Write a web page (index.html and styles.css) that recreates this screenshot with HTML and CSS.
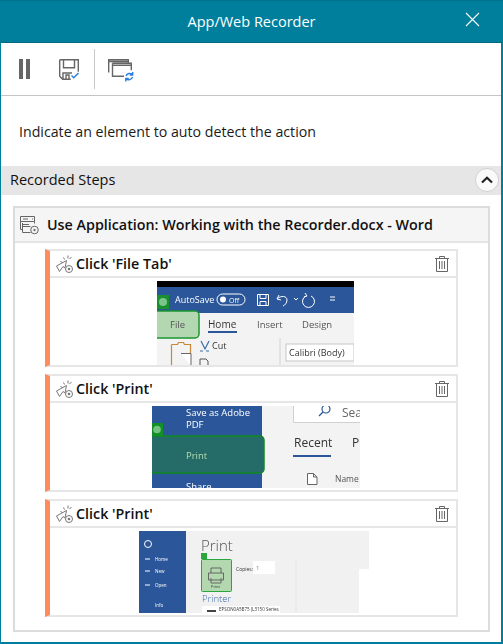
FILE: index.html
```html
<!doctype html>
<html>
<head>
    <meta charset="utf-8">
    <title>App/Web Recorder</title>
    <link rel="stylesheet" href="styles.css">
</head>
<body>
<div id="win">
    <div id="title">
        <span>App/Web Recorder</span>
        <svg class="close" width="15" height="15" viewBox="0 0 15 15"><path d="M1 1L14 14M14 1L1 14"/></svg>
    </div>

    <div id="toolbar">
        <svg class="pause" width="11" height="20" viewBox="0 0 11 20"><path d="M0 0h4v20H0zM7 0h4v20H7z"/></svg>
        <svg class="save" width="21" height="21" viewBox="0 0 21 21">
            <path class="grey" d="M.7.7h18.600v12M.7.7v16.600l3 3h8M4.500.7v8h11v-8M4 20v-6h9M7 20v-4h3v4"/>
            <path class="blue" d="M12.500 16.500l2.300 2.300 4.700-4.800"/>
        </svg>
        <span class="sep"></span>
        <svg class="windows" width="26" height="23" viewBox="0 0 26 23">
            <path class="grey" d="M.7 13.500V.7h19.600v3M.7 2.500h19.600M4.500 4.200h18.800v7M4.500 4.200v13h11.500M4.500 6.200h18.800"/>
            <path class="blue" d="M18 17a4 4 0 0 1 6.500-1.500M24.700 13v3h-3M24.500 18a4 4 0 0 1-6.500 1.800M17.800 22.500v-3h3"/>
        </svg>
    </div>

    <p id="hint">Indicate an element to auto detect the action</p>

    <div id="steps-head">
        <span>Recorded Steps</span>
        <span class="collapse"><svg width="12" height="8" viewBox="0 0 12 8"><path d="M1 6.500L6 1.800l5 4.700"/></svg></span>
    </div>

    <div id="app">
        <div class="app-head">
            <svg class="app-icon" width="19" height="19" viewBox="0 0 19 19">
                <path d="M.5.500h14v5H.5zM.5 5.500v8h2M14.500 5.500v2M3 3h5M3 8.500h6M2.500 7v9.500h8M2.500 10.500h8M12 3h1"/>
                <circle cx="14.500" cy="14" r="3.800"/><circle class="dot" cx="14.500" cy="14" r="1.200"/>
            </svg>
            Use Application: Working with the Recorder.docx - Word
        </div>
        <div class="step-list">

            <div class="step">
                <div class="step-head">
                    <svg class="click" width="17" height="18" viewBox="0 0 17 18"><use href="#click-icon"/></svg>
                    <span class="step-name">Click 'File Tab'</span>
                    <svg class="trash" width="14" height="16" viewBox="0 0 14 16"><use href="#trash-icon"/></svg>
                </div>
                <div class="shot">
                    <svg class="thumb" width="197" height="84" viewBox="0 0 197 84">
                        <rect width="197" height="84" fill="#f3f3f3"/>
                        <rect width="197" height="6" fill="#000"/>
                        <rect y="6" width="197" height="26" fill="#2b579a"/>
                        <text class="w" x="18" y="22" font-size="9">AutoSave</text>
                        <rect class="wl" x="60" y="13" width="28" height="11" rx="5.500"/>
                        <circle cx="66" cy="18.500" r="3" fill="#fff"/>
                        <text class="w" x="72" y="21.500" font-size="7">Off</text>
                        <path class="wl" d="M100.500 13.500h11v11h-11zM103 13.500v4h6v-4M103 24.500v-4h6v4"/>
                        <path class="wl" d="M122 14l-2 4 4 1M120 18c4-4 10-3 10 1 0 3-2 5-4 6"/>
                        <path class="wl" d="M137 17l2 2 2-2"/>
                        <path class="wl" d="M149 15a6 6 0 1 0 5 0M148 12l2 3-3 1"/>
                        <path class="wl" d="M173 16h5M173 19h5"/>
                        <rect x="0" y="14" width="12" height="14" fill="#19912f"/>
                        <circle cx="6" cy="21" r="4" fill="#7cc48a"/>
                        <rect x="-3" y="30" width="45" height="27" rx="4" fill="#b3d7b1" stroke="#1b962f" stroke-width="1.500"/>
                        <text class="g" x="13" y="47" font-size="9.500">File</text>
                        <text class="d" x="51" y="47" font-size="10">Home</text>
                        <rect x="51" y="50" width="29" height="2" fill="#2b579a"/>
                        <text class="g" x="100" y="47" font-size="9.500">Insert</text>
                        <text class="g" x="145" y="47" font-size="9.500">Design</text>
                        <path d="M123 57v27" stroke="#d2d2d2"/>
                        <path d="M14.500 63.500h6l1-2h5l1 2h6v9M14.500 63.500v20.500" fill="none" stroke="#c9873a" stroke-width="1.200"/>
                        <path d="M24 72.500h10v12" fill="#fff" stroke="#666"/>
                        <path d="M44 60l4 8 4-8M43 70h3M49 70h3" fill="none" stroke="#3a6ea5" stroke-width="1.200"/>
                        <text class="d" x="55" y="68" font-size="9">Cut</text>
                        <path d="M43 78h6l2 2v4M43 78v6" fill="none" stroke="#555"/>
                        <rect x="129" y="63" width="68" height="17" fill="#fff" stroke="#c6c6c6"/>
                        <text class="d" x="132" y="75" font-size="9">Calibri (Body)</text>
                    </svg>
                </div>
            </div>

            <div class="step">
                <div class="step-head">
                    <svg class="click" width="17" height="18" viewBox="0 0 17 18"><use href="#click-icon"/></svg>
                    <span class="step-name">Click 'Print'</span>
                    <svg class="trash" width="14" height="16" viewBox="0 0 14 16"><use href="#trash-icon"/></svg>
                </div>
                <div class="shot">
                    <svg class="thumb nudge-r" width="208" height="82" viewBox="0 0 208 82">
                        <rect width="208" height="82" fill="#f3f3f3"/>
                        <rect width="110" height="82" fill="#2b579a"/>
                        <text class="w" x="34" y="10" font-size="9.500">Save as Adobe</text>
                        <text class="w" x="34" y="22" font-size="9.500">PDF</text>
                        <rect x="-3" y="30" width="115" height="37" rx="4" fill="#256b68" stroke="#0f8a1f" stroke-width="1.500"/>
                        <rect y="17" width="11" height="13" fill="#129025"/>
                        <circle cx="5" cy="23.500" r="3.800" fill="#76c283"/>
                        <text x="34" y="53" font-size="9.500" fill="#b7dcb3">Print</text>
                        <text class="w" x="34" y="84" font-size="9.500">Share</text>
                        <path d="M141.500 0v16.500H208" fill="#fff" stroke="#d0d0d0"/>
                        <rect x="142" y="0" width="66" height="16" fill="#fff"/>
                        <circle cx="174" cy="3" r="4" fill="none" stroke="#2b579a" stroke-width="1.200"/>
                        <path d="M171 6l-4 4" stroke="#2b579a" stroke-width="1.200"/>
                        <text x="190" y="11" font-size="12" fill="#666">Sea</text>
                        <text class="d" x="142" y="41" font-size="12">Recent</text>
                        <rect x="141" y="49" width="38" height="2" fill="#2b579a"/>
                        <text class="d" x="200" y="41" font-size="12">Pi</text>
                        <path d="M155.500 67.500h6l3.500 3.500v7.500h-9.500zM161.500 67.500v3.500h3.500" fill="#fff" stroke="#666"/>
                        <text x="183" y="76" font-size="8.500" fill="#555">Name</text>
                    </svg>
                </div>
            </div>

            <div class="step">
                <div class="step-head">
                    <svg class="click" width="17" height="18" viewBox="0 0 17 18"><use href="#click-icon"/></svg>
                    <span class="step-name">Click 'Print'</span>
                    <svg class="trash" width="14" height="16" viewBox="0 0 14 16"><use href="#trash-icon"/></svg>
                </div>
                <div class="shot">
                    <svg class="thumb soft" width="230" height="82" viewBox="0 0 230 82">
                        <rect width="230" height="82" fill="#f1f1f1"/>
                        <rect x="220" y="38" width="10" height="44" fill="#fff"/>
                        <path d="M157 30v52" stroke="#e3e3e3"/>
                        <rect width="47" height="82" fill="#2b579a"/>
                        <circle cx="9" cy="13" r="3.500" fill="none" stroke="#fff"/>
                        <text class="w" x="16" y="30" font-size="4.500">Home</text>
                        <text class="w" x="16" y="42" font-size="4.500">New</text>
                        <text class="w" x="16" y="56" font-size="4.500">Open</text>
                        <path d="M6 28h5M6 40h5M6 54h5" stroke="#fff"/>
                        <text class="w" x="16" y="76" font-size="4.500">Info</text>
                        <text class="thin" x="62" y="20" font-size="15" fill="#555">Print</text>
                        <rect x="62.500" y="28.500" width="30" height="32" rx="1" fill="#b3d8b0" stroke="#2aa63c"/>
                        <rect x="62" y="22" width="6" height="6" fill="#2aa63c"/>
                        <path d="M72 42v-5h10v5M69.500 42h15v7h-15zM72 47v5h10v-5" fill="none" stroke="#666"/>
                        <text class="d" x="72" y="57" font-size="4">Print</text>
                        <text class="d" x="97" y="40" font-size="5">Copies:</text>
                        <rect x="114" y="30" width="22" height="13" fill="#fff"/>
                        <text x="117" y="39" font-size="6" fill="#5a93c9">1</text>
                        <text class="thin" x="63" y="71" font-size="9.500" fill="#3f6aa8">Printer</text>
                        <rect x="63" y="75" width="78" height="7" fill="#fff"/>
                        <text class="d" x="80" y="80" font-size="4.500">EPSON0A5B75 (L3150 Series</text>
                        <path d="M68 80h9" stroke="#444" stroke-width="2"/>
                    </svg>
                </div>
            </div>

        </div>
    </div>
</div>

<svg class="defs" width="0" height="0">
    <symbol id="click-icon" viewBox="0 0 17 18">
        <g fill="none" stroke="#777">
            <path d="M.5 11L10.500 5.500 9 13 7 11.500 3.500 16.500z"/>
            <path d="M7.500 2.500l1 2M12 .5v3M15.500 2l-2 2M4.500 6.500l2 1"/>
            <circle cx="13" cy="14" r="3.500" fill="#fff"/>
        </g>
        <circle cx="13" cy="14" r="1.300" fill="#777"/>
    </symbol>
    <symbol id="trash-icon" viewBox="0 0 14 16">
        <path d="M0 2.500h14M4.500 2.500V.5h5v2M1.500 2.500v13h11v-13M4.500 5v8M7 5v8M9.500 5v8" fill="none" stroke="#666"/>
    </symbol>
</svg>
</body>
</html>
```

FILE: styles.css
```css
*{margin:0; padding:0; box-sizing:border-box;}
html, body {height:100%;}
body {font-family:"Open Sans","Noto Sans",sans-serif; background:#fff; overflow:hidden;}
svg {display:block; flex:none;}
.defs {position:absolute;}

#win {height:644px; border:solid #007f9d; border-width:0 2px 2px 1px; display:flex; flex-direction:column;}

#title {height:43px; flex:none; margin:0 -2px 0 -1px; background:#007f9d; border-top:1px solid #00718c; border-bottom:1px solid #006a83; color:#fff; font-size:14.5px; display:flex; align-items:center; justify-content:center; position:relative;}
.close {position:absolute; right:23px; top:11px;}
.close path {fill:none; stroke:#fff; stroke-width:1.100;}

#toolbar {height:53px; flex:none; border-bottom:1px solid #c4c4c4; display:flex; align-items:center;}
.pause {margin-left:18px; fill:#666;}
.save {margin-left:29px;}
.sep {width:1px; height:40px; background:#c9c9c9; margin-left:14px;}
.windows {margin-left:13px; margin-top:3px;}
.grey {fill:none; stroke:#666; stroke-width:1.400;}
.blue {fill:none; stroke:#2a7de1; stroke-width:1.400;}

#hint {margin:26px 0 0 18px; font-size:14.200px; line-height:20px; height:44px; color:#1a1a1a; flex:none;}

#steps-head {height:29px; flex:none; background:#e6e6e6; display:flex; align-items:center; justify-content:space-between; padding:0 2px 2px 9px; font-size:14.500px; font-weight:500; color:#111;}
.collapse {width:24px; height:24px; border-radius:50%; background:#fafafa; border:1px solid #d0d0d0; display:flex; align-items:center; justify-content:center;}
.collapse path {fill:none; stroke:#222; stroke-width:2.200;}

#app {margin:11px 11px 0 12px; height:426px; border:2px solid #dcdcdc; flex:none;}
.app-head {height:35px; background:#f5f5f5; border-bottom:2px solid #e4e4e4; display:flex; align-items:center; gap:8px; padding-left:5px; font-size:14.300px; font-weight:600; color:#111;}
.app-icon {margin-top:1px;}
.app-icon path, .app-icon circle {fill:none; stroke:#666;}
.app-icon .dot {fill:#777; stroke:none;}

.step-list {padding:6px 30px 0 30px; display:flex; flex-direction:column; gap:7px;}
.step {height:118px; border:2px solid #e6e6e6; border-left:5px solid #ff8a5c;}
.step-head {height:27px; border-bottom:2px solid #e6e6e6; display:flex; align-items:center; padding:0 7px 0 6px; gap:3px; font-size:14.300px; font-weight:600; color:#111;}
.step-name {flex:1;}
.shot {display:flex; justify-content:center; padding-top:3px; padding-left:4px;}
.thumb {overflow:hidden; filter:blur(.3px);}
.nudge-r {margin-left:2px;}
.soft {filter:blur(.5px); margin-right:2px;}
.w {fill:#fff;}
.wl {fill:none; stroke:#fff;}
.g {fill:#555;}
.d {fill:#333;}
.thin {font-weight:300;}
```
